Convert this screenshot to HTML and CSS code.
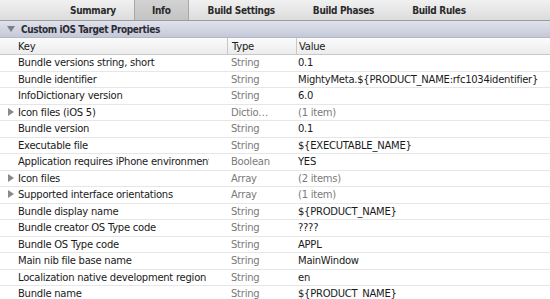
FILE: index.html
```html
<!DOCTYPE html>
<html lang="en">
<head>
    <meta charset="UTF-8">
    <title>Info - Custom iOS Target Properties</title>
    <link rel="stylesheet" href="styles.css">
</head>
<body>
    <!-- Editor tabs -->
    <div class="tabs">
        <div class="tab">Summary</div>
        <div class="tab tab-selected">Info</div>
        <div class="tab">Build Settings</div>
        <div class="tab">Build Phases</div>
        <div class="tab">Build Rules</div>
    </div>

    <!-- Section -->
    <div class="section-header">
        <span class="triangle-down"></span>
        Custom iOS Target Properties
    </div>

    <div class="table">
        <div class="row head">
            <div class="cell key">Key</div>
            <div class="cell type">Type</div>
            <div class="cell value">Value</div>
        </div>

        <div class="row">
            <div class="cell key">Bundle versions string, short</div>
            <div class="cell type">String</div>
            <div class="cell value">0.1</div>
        </div>
        <div class="row">
            <div class="cell key">Bundle identifier</div>
            <div class="cell type">String</div>
            <div class="cell value">MightyMeta.${PRODUCT_NAME:rfc1034identifier}</div>
        </div>
        <div class="row">
            <div class="cell key">InfoDictionary version</div>
            <div class="cell type">String</div>
            <div class="cell value">6.0</div>
        </div>
        <div class="row">
            <div class="cell key"><span class="triangle-right"></span>Icon files (iOS 5)</div>
            <div class="cell type">Dictionary</div>
            <div class="cell value muted">(1 item)</div>
        </div>
        <div class="row">
            <div class="cell key">Bundle version</div>
            <div class="cell type">String</div>
            <div class="cell value">0.1</div>
        </div>
        <div class="row">
            <div class="cell key">Executable file</div>
            <div class="cell type">String</div>
            <div class="cell value">${EXECUTABLE_NAME}</div>
        </div>
        <div class="row">
            <div class="cell key">Application requires iPhone environment</div>
            <div class="cell type">Boolean</div>
            <div class="cell value">YES</div>
        </div>
        <div class="row">
            <div class="cell key"><span class="triangle-right"></span>Icon files</div>
            <div class="cell type">Array</div>
            <div class="cell value muted">(2 items)</div>
        </div>
        <div class="row">
            <div class="cell key"><span class="triangle-right"></span>Supported interface orientations</div>
            <div class="cell type">Array</div>
            <div class="cell value muted">(1 item)</div>
        </div>
        <div class="row">
            <div class="cell key">Bundle display name</div>
            <div class="cell type">String</div>
            <div class="cell value">${PRODUCT_NAME}</div>
        </div>
        <div class="row">
            <div class="cell key">Bundle creator OS Type code</div>
            <div class="cell type">String</div>
            <div class="cell value">????</div>
        </div>
        <div class="row">
            <div class="cell key">Bundle OS Type code</div>
            <div class="cell type">String</div>
            <div class="cell value">APPL</div>
        </div>
        <div class="row">
            <div class="cell key">Main nib file base name</div>
            <div class="cell type">String</div>
            <div class="cell value">MainWindow</div>
        </div>
        <div class="row">
            <div class="cell key">Localization native development region</div>
            <div class="cell type">String</div>
            <div class="cell value">en</div>
        </div>
        <div class="row">
            <div class="cell key">Bundle name</div>
            <div class="cell type">String</div>
            <div class="cell value">${PRODUCT_NAME}</div>
        </div>
    </div>
</body>
</html>
```

FILE: styles.css
```css
* {
    margin: 0;
    padding: 0;
    box-sizing: border-box;
}

body {
    font-family: "DejaVu Sans", Verdana, sans-serif;
    font-size: 10px;
    letter-spacing: -0.25px;
    color: #1a1a1a;
    background: #fff;
    height: 100vh;
    overflow: hidden;
}

/* Tabs */
.tabs {
    display: flex;
    height: 21px;
    padding-left: 52px;
    background: linear-gradient(#f1f1f1, #dcdcdc);
    border-bottom: 1px solid #9c9c9c;
}

.tab {
    display: flex;
    align-items: center;
    padding: 0 18px;
    font-family: "DejaVu Sans Condensed", "DejaVu Sans", sans-serif;
    font-weight: bold;
    letter-spacing: -0.3px;
    color: #2a2a2a;
}

.tab:nth-child(n+3) {
    padding: 0 19px;
}

.tab-selected {
    background: linear-gradient(#d2d2d2, #c4c4c4);
    border-left: 1px solid #a8a8a8;
    border-right: 1px solid #a8a8a8;
    padding: 0 17px;
}

/* Section header */
.section-header {
    display: flex;
    align-items: center;
    height: 17px;
    padding-left: 7px;
    background: linear-gradient(#dfe2ec, #c5c9d7);
    border-bottom: 1px solid #b4b8c4;
    font-family: "DejaVu Sans Condensed", "DejaVu Sans", sans-serif;
    font-weight: bold;
    letter-spacing: -0.4px;
    color: #2c2c34;
}

.triangle-down {
    width: 0;
    height: 0;
    border-left: 4px solid transparent;
    border-right: 4px solid transparent;
    border-top: 6px solid #7c7f88;
    margin-right: 6px;
}

.triangle-right {
    display: inline-block;
    width: 0;
    height: 0;
    border-top: 4px solid transparent;
    border-bottom: 4px solid transparent;
    border-left: 6px solid #8a8a8a;
    position: relative;
    left: -10px;
    margin-right: -6px;
}

/* Table */
.row {
    display: grid;
    grid-template-columns: 227px 69px 1fr;
    height: 16.5px;
    border-bottom: 1px solid #e6e6e6;
    align-items: center;
}

.row.head {
    height: 17px;
    background: linear-gradient(#fbfbfb, #ececec);
    border-bottom: 1px solid #c8c8c8;
}

.row.head .cell {
    height: 100%;
    display: flex;
    align-items: center;
}

.row.head .type,
.row.head .value {
    border-left: 1px solid #c8c8c8;
}

.cell {
    white-space: nowrap;
    overflow: hidden;
    line-height: 15px;
}

.key {
    padding-left: 18px;
    margin-right: 18px;
}

.type {
    padding-left: 4px;
    margin-right: 22px;
    color: #7a7a7a;
    text-overflow: ellipsis;
}

.row.head .key,
.row.head .type {
    margin-right: 0;
}

.row.head .type {
    color: #1a1a1a;
}

.value {
    padding-left: 2px;
}

.muted {
    color: #7a7a7a;
}
```
